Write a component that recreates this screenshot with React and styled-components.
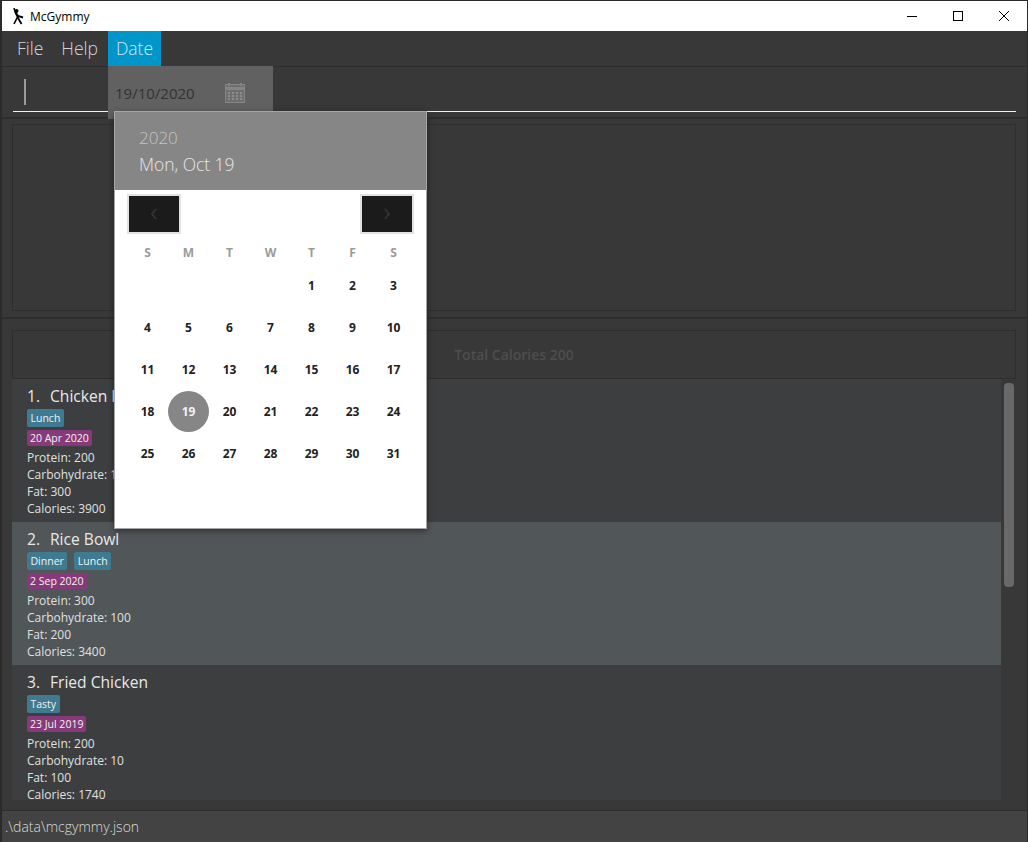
import styled, { createGlobalStyle } from 'styled-components';

const GlobalStyle = createGlobalStyle`
  html, body {
    margin: 0;
    padding: 0;
    background: #383838;
    font-family: "Open Sans", "Noto Sans", sans-serif;
  }
`;

const meals = [
  {
    name: 'Chicken Rice',
    tags: ['Lunch'],
    date: '20 Apr 2020',
    stats: ['Protein: 200', 'Carbohydrate: 100', 'Fat: 300', 'Calories: 3900']
  },
  {
    name: 'Rice Bowl',
    tags: ['Dinner', 'Lunch'],
    date: '2 Sep 2020',
    stats: ['Protein: 300', 'Carbohydrate: 100', 'Fat: 200', 'Calories: 3400'],
    selected: true
  },
  {
    name: 'Fried Chicken',
    tags: ['Tasty'],
    date: '23 Jul 2019',
    stats: ['Protein: 200', 'Carbohydrate: 10', 'Fat: 100', 'Calories: 1740']
  }
];

const weeks = [
  ['', '', '', '', 1, 2, 3],
  [4, 5, 6, 7, 8, 9, 10],
  [11, 12, 13, 14, 15, 16, 17],
  [18, 19, 20, 21, 22, 23, 24],
  [25, 26, 27, 28, 29, 30, 31]
];

const Window = styled.div`
  position: relative;
  width: 1028px;
  height: 842px;
  box-sizing: border-box;
  border: 1px solid #2b2b2b;
  border-left-width: 2px;
  border-bottom: 0;
  background: #383838;
  display: flex;
  flex-direction: column;
  overflow: hidden;
`;

const TitleBar = styled.div`
  height: 30px;
  flex: none;
  margin-left: -1px;
  background: #fff;
  display: flex;
  align-items: center;
  padding-left: 10px;
  font-size: 12px;
  color: #000;
`;

const AppName = styled.span`
  margin-left: 5px;
  flex: 1;
`;

const WinButton = styled.div`
  width: 46px;
  height: 30px;
  display: flex;
  align-items: center;
  justify-content: center;
`;

const MenuBar = styled.div`
  height: 35px;
  flex: none;
  display: flex;
  gap: 2px;
  padding-left: 7px;
  background: #383838;
  border-bottom: 1px solid #2c2c2c;
`;

const MenuItem = styled.div`
  padding: 0 8px;
  height: 35px;
  line-height: 35px;
  font-size: 17.5px;
  font-weight: 300;
  color: ${(p) => (p.$active ? '#cdeaf5' : '#d4d4d4')};
  background: ${(p) => (p.$active ? '#0096c9' : 'transparent')};
`;

const CommandBar = styled.div`
  height: 50px;
  flex: none;
  padding: 0 11px;
  border-bottom: 2px solid #2e2e2e;
`;

const CommandInput = styled.div`
  height: 45px;
  box-sizing: border-box;
  border-bottom: 1px solid #f2f2f2;
  padding: 12px 0 5px 11px;
`;

const Caret = styled.div`
  width: 2px;
  height: 26px;
  background: #9c9c9c;
`;

const ResultPane = styled.div`
  height: 200px;
  flex: none;
  box-sizing: border-box;
  padding: 5px 11px 6px 10px;
  border-bottom: 2px solid #2e2e2e;
`;

const ResultBox = styled.div`
  height: 100%;
  box-sizing: border-box;
  border: 1px solid #2e2e2e;
`;

const ListPane = styled.div`
  flex: 1;
  min-height: 0;
  display: flex;
  flex-direction: column;
  padding: 11px 11px 10px 10px;
`;

const TotalBox = styled.div`
  height: 49px;
  flex: none;
  box-sizing: border-box;
  border: 1px solid #2e2e2e;
  display: flex;
  align-items: center;
  justify-content: center;
  font-size: 14px;
  font-weight: 600;
  color: #4e4e4e;
`;

const ListArea = styled.div`
  flex: 1;
  min-height: 0;
  display: flex;
  gap: 3px;
`;

const Cards = styled.div`
  width: 989px;
  height: 100%;
  overflow: hidden;
  background: #3c3e3f;
`;

const Card = styled.div`
  height: 143px;
  box-sizing: border-box;
  padding: 8px 15px 0;
  color: #e4e4e4;
  background: ${(p) => (p.$selected ? '#515658' : '#3c3e3f')};
`;

const CardTitle = styled.div`
  display: flex;
  font-size: 15.6px;
  font-weight: 500;
  line-height: 19px;
  color: #e8e8e8;
`;

const CardIndex = styled.span`
  width: 23px;
`;

const TagRow = styled.div`
  display: flex;
  gap: 7px;
  margin-top: 3px;
`;

const Tag = styled.span`
  height: 18px;
  line-height: 18px;
  padding: 0 3.5px;
  border-radius: 2px;
  font-size: 10.5px;
  color: #f2f2f2;
  background: #3e7b91;
`;

const DateTag = styled.div`
  width: fit-content;
  height: 16px;
  line-height: 16px;
  margin-top: 3px;
  padding: 0 3px;
  border-radius: 2px;
  font-size: 10.5px;
  color: #f2f2f2;
  background: #873a79;
`;

const Stats = styled.div`
  margin-top: 3px;
  font-size: 12px;
  line-height: 17px;
  color: #e0e0e0;
`;

const Track = styled.div`
  width: 12px;
  padding-top: 4px;
`;

const Thumb = styled.div`
  width: 10px;
  height: 204px;
  border-radius: 4px;
  background: #696969;
`;

const StatusBar = styled.div`
  height: 32px;
  flex: none;
  margin-left: -1px;
  box-sizing: border-box;
  border-top: 1px solid #2e2e2e;
  background: #434343;
  padding-left: 4px;
  line-height: 31px;
  font-size: 14px;
  font-weight: 300;
  color: #dcdcdc;
`;

const DateField = styled.div`
  position: absolute;
  left: 106px;
  top: 65px;
  width: 165px;
  height: 53px;
  background: #616161;
  display: flex;
  align-items: center;
  justify-content: space-between;
  padding: 0 28px 0 7px;
  box-sizing: border-box;
  font-size: 15px;
  color: #333;
`;

const Popup = styled.div`
  position: absolute;
  left: 112px;
  top: 110px;
  width: 313px;
  height: 418px;
  box-sizing: border-box;
  border: 1px solid #a6a6a6;
  background: #fff;
  box-shadow: 0 2px 6px rgba(0, 0, 0, 0.45);
`;

const PopupHeader = styled.div`
  height: 78px;
  box-sizing: border-box;
  background: #868686;
  padding: 14px 24px 0;
  font-weight: 300;
`;

const PopupYear = styled.div`
  font-size: 17px;
  line-height: 24px;
  color: #c4c4c4;
`;

const PopupDate = styled.div`
  font-size: 17.4px;
  line-height: 29px;
  color: #e6e6e6;
`;

const NavRow = styled.div`
  display: flex;
  justify-content: space-between;
  padding: 4px 12px 0;
`;

const NavButton = styled.div`
  width: 54px;
  height: 40px;
  box-sizing: border-box;
  border: 2px solid #e2e2e2;
  background: #1b1b1b;
  display: flex;
  align-items: center;
  justify-content: center;
`;

const Grid = styled.div`
  display: grid;
  grid-template-columns: repeat(7, 41px);
  grid-auto-rows: 42px;
  padding: 0 12px;
`;

const WeekRow = styled(Grid)`
  grid-auto-rows: 23px;
  margin-top: 7px;
`;

const WeekDay = styled.div`
  display: flex;
  align-items: center;
  justify-content: center;
  font-size: 12px;
  font-weight: 700;
  color: #9a9a9a;
`;

const Day = styled.div`
  display: flex;
  align-items: center;
  justify-content: center;
  font-size: 12px;
  font-weight: 700;
  color: #222;
`;

const Selected = styled.div`
  width: 41px;
  height: 41px;
  border-radius: 50%;
  background: #868686;
  color: #f2f2f2;
  display: flex;
  align-items: center;
  justify-content: center;
`;

const GymIcon = () => (
  <svg width="14" height="17" viewBox="0 0 14 17">
    <circle cx="5.5" cy="3" r="2" fill="#000" />
    <path d="M3 0 L4.5 5 L6.5 9 L3 16" stroke="#000" strokeWidth="1.6" fill="none" />
    <path d="M6.5 9 L10.5 16" stroke="#000" strokeWidth="1.8" fill="none" />
    <path d="M5 5 L7 8 L12 9.5" stroke="#000" strokeWidth="2" fill="none" />
  </svg>
);

const CalendarIcon = () => (
  <svg width="20" height="20" viewBox="0 0 20 20">
    <rect x="0.5" y="1.5" width="19" height="18" fill="#6f6f6f" stroke="#858585" />
    <rect x="3" y="0" width="2" height="3" fill="#858585" />
    <rect x="15" y="0" width="2" height="3" fill="#858585" />
    <rect x="1" y="4" width="18" height="3" fill="#858585" />
    {[9, 12, 15].map((y) =>
      [3, 7, 11, 15].map((x) => (
        <rect key={`${x}-${y}`} x={x} y={y} width="2" height="2" fill="#8c8c8c" />
      ))
    )}
  </svg>
);

const App = () => (
  <>
    <GlobalStyle />
    <Window>
      <TitleBar>
        <GymIcon />
        <AppName>McGymmy</AppName>
        <WinButton>
          <svg width="10" height="10" viewBox="0 0 10 10">
            <path d="M0 5.5H10" stroke="#000" />
          </svg>
        </WinButton>
        <WinButton>
          <svg width="10" height="10" viewBox="0 0 10 10">
            <rect x="0.5" y="0.5" width="9" height="9" fill="none" stroke="#000" />
          </svg>
        </WinButton>
        <WinButton>
          <svg width="10" height="10" viewBox="0 0 10 10">
            <path d="M0 0L10 10M10 0L0 10" stroke="#000" />
          </svg>
        </WinButton>
      </TitleBar>

      <MenuBar>
        <MenuItem>File</MenuItem>
        <MenuItem>Help</MenuItem>
        <MenuItem $active>Date</MenuItem>
      </MenuBar>

      <CommandBar>
        <CommandInput>
          <Caret />
        </CommandInput>
      </CommandBar>

      <ResultPane>
        <ResultBox />
      </ResultPane>

      <ListPane>
        <TotalBox>Total Calories 200</TotalBox>
        <ListArea>
          <Cards>
            {meals.map((meal, i) => (
              <Card key={meal.name} $selected={meal.selected}>
                <CardTitle>
                  <CardIndex>{i + 1}.</CardIndex>
                  {meal.name}
                </CardTitle>
                <TagRow>
                  {meal.tags.map((tag) => (
                    <Tag key={tag}>{tag}</Tag>
                  ))}
                </TagRow>
                <DateTag>{meal.date}</DateTag>
                <Stats>
                  {meal.stats.map((line) => (
                    <div key={line}>{line}</div>
                  ))}
                </Stats>
              </Card>
            ))}
          </Cards>
          <Track>
            <Thumb />
          </Track>
        </ListArea>
      </ListPane>

      <StatusBar>.\data\mcgymmy.json</StatusBar>

      <DateField>
        19/10/2020
        <CalendarIcon />
      </DateField>

      <Popup>
        <PopupHeader>
          <PopupYear>2020</PopupYear>
          <PopupDate>Mon, Oct 19</PopupDate>
        </PopupHeader>
        <NavRow>
          <NavButton>
            <svg width="8" height="12" viewBox="0 0 8 12">
              <path d="M6 1L2 6L6 11" stroke="#333" strokeWidth="2" fill="none" />
            </svg>
          </NavButton>
          <NavButton>
            <svg width="8" height="12" viewBox="0 0 8 12">
              <path d="M2 1L6 6L2 11" stroke="#333" strokeWidth="2" fill="none" />
            </svg>
          </NavButton>
        </NavRow>
        <WeekRow>
          {['S', 'M', 'T', 'W', 'T', 'F', 'S'].map((d, i) => (
            <WeekDay key={i}>{d}</WeekDay>
          ))}
        </WeekRow>
        <Grid>
          {weeks.flat().map((d, i) => (
            <Day key={i}>{d === 19 ? <Selected>{d}</Selected> : d}</Day>
          ))}
        </Grid>
      </Popup>
    </Window>
  </>
);

export default App;
